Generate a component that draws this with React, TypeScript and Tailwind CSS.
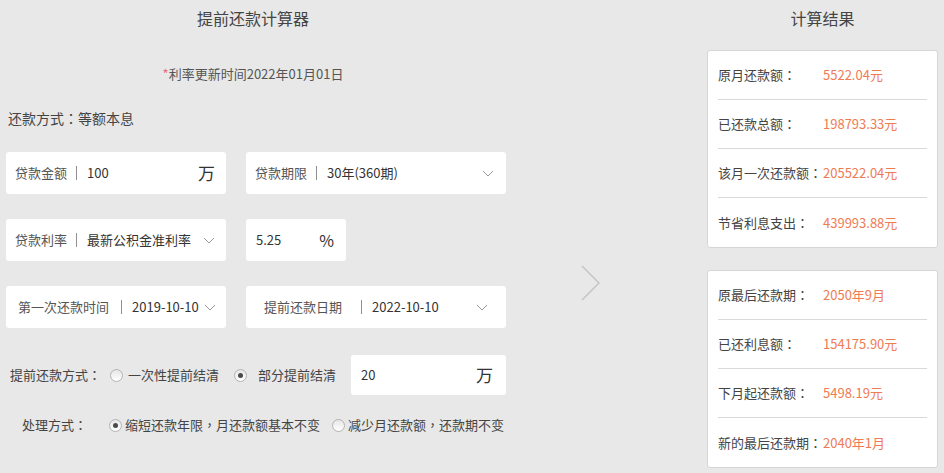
import type { ReactNode } from 'react';

const font = { fontFamily: '"Noto Sans CJK SC", "Liberation Sans", sans-serif' };

// centred full-width punctuation, as in the reference
function P({ c }: { c: string }) {
  return <span className="font-['Noto_Sans_CJK_TC',sans-serif]">{c}</span>;
}

function Chevron({ className = '' }: { className?: string }) {
  return (
    <svg viewBox="0 0 12 7" className={`h-[7px] w-[12px] ${className}`} fill="none" stroke="#9a9a9a" strokeWidth="1">
      <polyline points="1,1 6,6 11,1" />
    </svg>
  );
}

function Box({ children, className = '' }: { children: ReactNode; className?: string }) {
  return (
    <div className={`flex h-[42px] items-center rounded-[3px] bg-white text-[13px] ${className}`}>{children}</div>
  );
}

function Sep({ className = '' }: { className?: string }) {
  return <span className={`h-[14px] w-px bg-[#8f8f8f] ${className}`} />;
}

function Radio({ checked = false }: { checked?: boolean }) {
  return (
    <span className="flex h-[13px] w-[13px] items-center justify-center rounded-full border border-[#b3b3b3] bg-gradient-to-b from-[#e6e6e6] to-white">
      {checked && <span className="h-[5px] w-[5px] rounded-full bg-[#4a4a4a]" />}
    </span>
  );
}

function ResultCard({ rows }: { rows: [string, string][] }) {
  return (
    <div className="rounded-[3px] border border-[#d6d6d6] bg-white px-[10px]">
      {rows.map(([k, v], i) => (
        <div
          key={k}
          className={`flex h-[49px] items-center text-[13px] ${i < rows.length - 1 ? 'border-b border-[#d9d9d9]' : ''}`}
        >
          <span className="w-[105px] text-[#444]">
            {k}
            <P c="：" />
          </span>
          <span className="text-[#ef7b53]">{v}</span>
        </div>
      ))}
    </div>
  );
}

export default function App() {
  return (
    <div className="flex h-[473px] w-[944px] bg-[#e8e8e8]" style={font}>
      <div className="w-[506px] pt-[8px]">
        <h1 className="text-center text-[16px] leading-[20px] text-[#444]">提前还款计算器</h1>
        <p className="mt-[36px] text-center text-[13px] leading-[20px] text-[#555]">
          <span className="text-[#f06a7a]">*</span>利率更新时间2022年01月01日
        </p>
        <p className="mt-[24px] pl-[8px] text-[14px] leading-[20px] text-[#444]">
          还款方式<P c="：" />等额本息
        </p>

        <div className="mt-[24px] flex gap-[20px] pl-[6px]">
          <Box className="w-[220px] pl-[9px] pr-[11px]">
            <span className="text-[#555]">贷款金额</span>
            <Sep className="ml-[9px]" />
            <span className="ml-[10px] flex-1 text-[#333]">100</span>
            <span className="text-[17px] text-[#333]">万</span>
          </Box>
          <Box className="w-[260px] pl-[9px] pr-[12px]">
            <span className="text-[#555]">贷款期限</span>
            <Sep className="ml-[9px]" />
            <span className="ml-[10px] flex-1 text-[#333]">30年(360期)</span>
            <Chevron />
          </Box>
        </div>

        <div className="mt-[25px] flex gap-[20px] pl-[6px]">
          <Box className="w-[220px] pl-[9px] pr-[11px]">
            <span className="text-[#555]">贷款利率</span>
            <Sep className="ml-[9px]" />
            <span className="ml-[10px] flex-1 text-[#333]">最新公积金准利率</span>
            <Chevron className="h-[6px] w-[9px]" />
          </Box>
          <Box className="w-[100px] pl-[10px] pr-[12px]">
            <span className="flex-1 text-[#333]">5.25</span>
            <span className="text-[16px] text-[#333]">%</span>
          </Box>
        </div>

        <div className="mt-[25px] flex gap-[20px] pl-[6px]">
          <Box className="w-[220px] pl-[12px] pr-[10px]">
            <span className="text-[#555]">第一次还款时间</span>
            <Sep className="ml-[12px]" />
            <span className="ml-[10px] flex-1 text-[#333]">2019-10-10</span>
            <Chevron />
          </Box>
          <Box className="w-[260px] pl-[18px] pr-[18px]">
            <span className="text-[#555]">提前还款日期</span>
            <Sep className="ml-[19px]" />
            <span className="ml-[10px] flex-1 text-[#333]">2022-10-10</span>
            <Chevron />
          </Box>
        </div>

        <div className="mt-[27px] flex items-center pl-[10px] text-[13px] text-[#444]">
          <span>
            提前还款方式<P c="：" />
          </span>
          <span className="ml-[9px]"><Radio /></span>
          <span className="ml-[5px]">一次性提前结清</span>
          <span className="ml-[15px]"><Radio checked /></span>
          <span className="ml-[11px]">部分提前结清</span>
          <div className="ml-[15px] flex h-[40px] w-[155px] items-center rounded-[3px] bg-white pl-[10px] pr-[13px]">
            <span className="flex-1 text-[#333]">20</span>
            <span className="text-[17px] text-[#333]">万</span>
          </div>
        </div>

        <div className="mt-[20px] flex items-center pl-[22px] text-[13px] leading-[20px] text-[#444]">
          <span>
            处理方式<P c="：" />
          </span>
          <span className="ml-[22px]"><Radio checked /></span>
          <span className="ml-[3px]">
            缩短还款年限<P c="，" />月还款额基本不变
          </span>
          <span className="ml-[12px]"><Radio /></span>
          <span className="ml-[3px]">
            减少月还款额<P c="，" />还款期不变
          </span>
        </div>
      </div>

      <div className="w-[201px] pl-[75px] pt-[265px]">
        <svg viewBox="0 0 19 36" className="h-[36px] w-[19px]" fill="none" stroke="#c4c4c4" strokeWidth="1.5">
          <polyline points="1,1 18,18 1,35" />
        </svg>
      </div>

      <div className="w-[231px] pt-[8px]">
        <h2 className="text-center text-[16px] leading-[20px] text-[#444]">计算结果</h2>
        <div className="mt-[22px]">
          <ResultCard
            rows={[
              ['原月还款额', '5522.04元'],
              ['已还款总额', '198793.33元'],
              ['该月一次还款额', '205522.04元'],
              ['节省利息支出', '439993.88元'],
            ]}
          />
        </div>
        <div className="mt-[22px]">
          <ResultCard
            rows={[
              ['原最后还款期', '2050年9月'],
              ['已还利息额', '154175.90元'],
              ['下月起还款额', '5498.19元'],
              ['新的最后还款期', '2040年1月'],
            ]}
          />
        </div>
      </div>
    </div>
  );
}
